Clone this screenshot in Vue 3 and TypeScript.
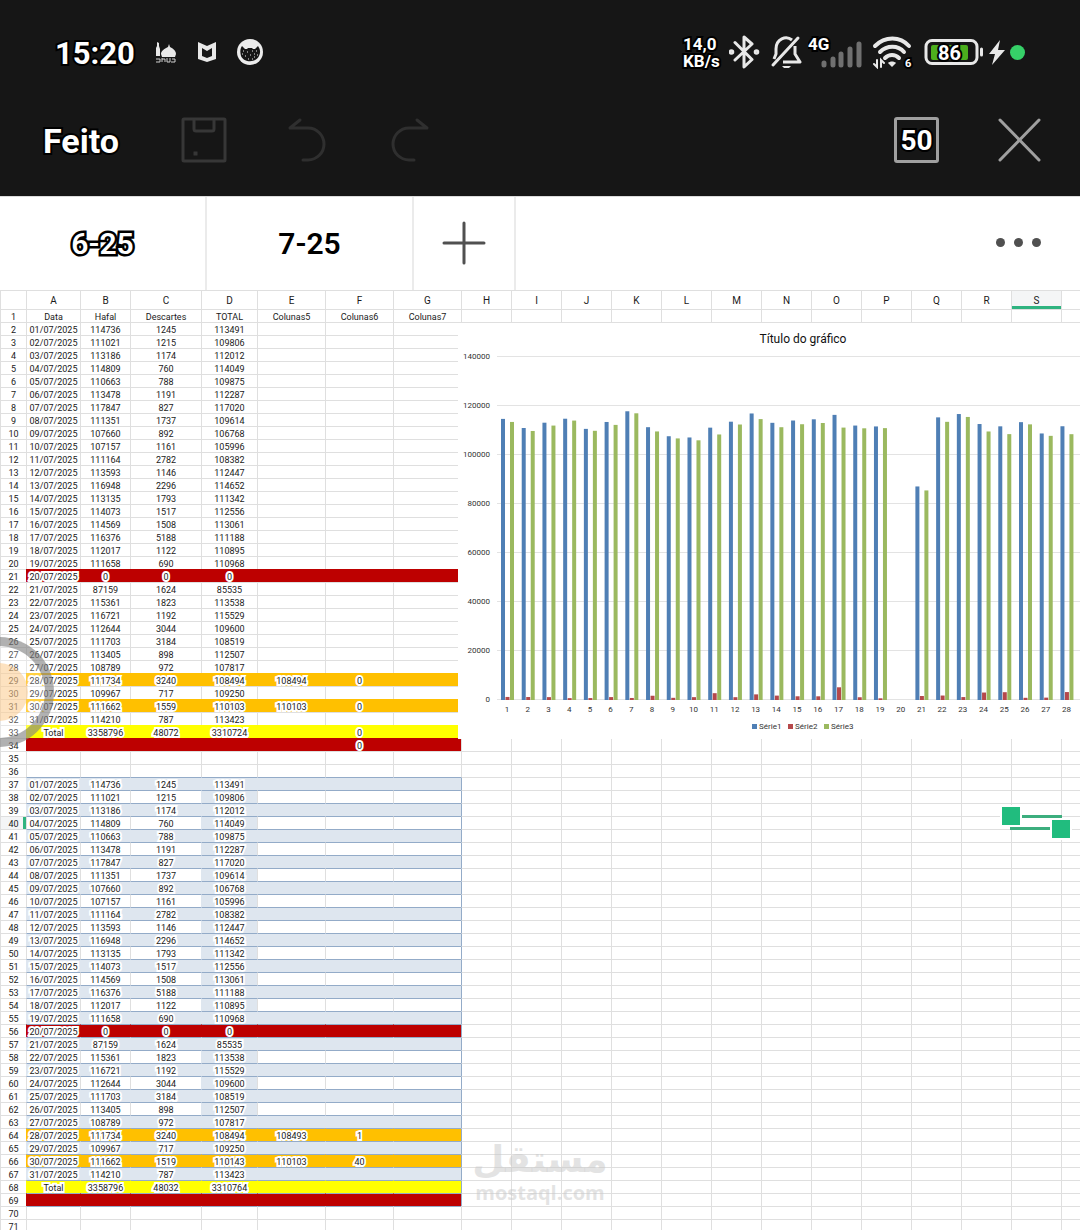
<script setup lang="ts">
type Fill = '' | 'red' | 'orange' | 'yellow' | 'band' | 'plain'
interface Row { n: number; fill: Fill; cells: string[] }

const columns = [...'ABCDEFGHIJKLMNOPQRS'.split(''), '']
const widths = [54, 50, 71, 56, 68, 68, 68]
const colWidth = (i: number): string => (i === columns.length - 1 ? 'auto' : `${widths[i] ?? 50}px`)

const production: number[] = [
  114736, 111021, 113186, 114809, 110663, 113478, 117847, 111351, 107660, 107157, 111164, 113593, 116948, 113135, 114073, 114569,
  116376, 112017, 111658, 0, 87159, 115361, 116721, 112644, 111703, 113405, 108789, 111734, 109967, 111662, 114210,
]
const discards: number[] = [
  1245, 1215, 1174, 760, 788, 1191, 827, 1737, 892, 1161, 2782, 1146, 2296, 1793, 1517, 1508,
  5188, 1122, 690, 0, 1624, 1823, 1192, 3044, 3184, 898, 972, 3240, 717, 1559, 787,
]
const netTotal = production.map((p, i) => p - discards[i])

const dateOf = (i: number): string => `${String(i + 1).padStart(2, '0')}/07/2025`

function buildRow(n: number): Row {
  if (n === 1) return { n, fill: '', cells: ['Data', 'Hafal', 'Descartes', 'TOTAL', 'Colunas5', 'Colunas6', 'Colunas7'] }
  if (n >= 2 && n <= 32) {
    const i = n - 2
    const cells = [dateOf(i), String(production[i]), String(discards[i]), String(netTotal[i])]
    if (n === 29) cells.push('108494', '0')
    if (n === 31) cells.push('110103', '0')
    return { n, fill: n === 21 ? 'red' : n === 29 || n === 31 ? 'orange' : '', cells }
  }
  if (n === 33) return { n, fill: 'yellow', cells: ['Total', '3358796', '48072', '3310724', '', '0'] }
  if (n === 34) return { n, fill: 'red', cells: ['', '', '', '', '', '0'] }
  if (n >= 37 && n <= 67) {
    const i = n - 37
    const cells = [dateOf(i), String(production[i]), String(discards[i]), String(netTotal[i])]
    if (n === 64) cells.push('108493', '1')
    if (n === 66) {
      cells[2] = '1519'
      cells[3] = '110143'
      cells.push('110103', '40')
    }
    return { n, fill: n === 56 ? 'red' : n === 64 || n === 66 ? 'orange' : n % 2 ? 'band' : 'plain', cells }
  }
  if (n === 68) return { n, fill: 'yellow', cells: ['Total', '3358796', '48032', '3310764'] }
  if (n === 69) return { n, fill: 'red', cells: [] }
  return { n, fill: '', cells: [] }
}
const rows: Row[] = Array.from({ length: 71 }, (_, i) => buildRow(i + 1))

function cellClass(row: Row, c: number): string[] {
  const out: string[] = []
  const framed = row.n >= 37 && row.n <= 69
  if (c < 7) {
    if (row.fill === 'plain') {
      if (c === 3) out.push('fill', 'band')
    } else if (row.fill) out.push('fill', row.fill)
    if (framed || row.n === 70) out.push('rule')
  }
  if (c === 7 && framed) out.push('edge')
  return out
}

const plotLeft = 39
const base = 377
const step = 20.72
const ticks = [0, 20000, 40000, 60000, 80000, 100000, 120000, 140000]
const yOf = (v: number): number => base - (v * 49) / 20000
const series = [
  { name: 'Série1', color: '#4f7fb5', data: production, dx: 4 },
  { name: 'Série2', color: '#b5494b', data: discards, dx: 8.5 },
  { name: 'Série3', color: '#9bb95f', data: netTotal, dx: 13 },
]
</script>

<template>
  <div class="app">
    <header class="top">
      <div class="status">
        <span class="clock">15:20</span>
        <svg class="s-icon" width="22" height="26" viewBox="0 0 22 26" fill="#e8e8e8">
          <path d="M2 3l2 1v3l1 3v7H1V9l1-2zM14 5l1 3c4 2 6 4 6 7l-1 3H7l-1-3c0-3 3-5 7-7z" />
          <path d="M1 20h4v3H1M7 19v4M7 20h3v3M12 19v4h3v-4M17 20h3v3h-4" fill="none" stroke="#cfcfcf" stroke-width="1" />
        </svg>
        <svg class="s-icon" width="20" height="26" viewBox="0 0 20 26"><path d="M1 3l9 4 9-4v17l-9 3-9-3zM5 9v8l5 2 5-2V9l-5 3z" fill="#e8e8e8" fill-rule="evenodd" /></svg>
        <svg class="s-icon" width="26" height="26" viewBox="0 0 26 26">
          <circle cx="13" cy="13" r="13" fill="#ececec" />
          <path d="M5 7l3 3h2l1-1h4l1 1h2l3-3c2 3 3 6 1 10-3 7-15 7-18 0-1-4-1-7 1-10z" fill="#161616" />
          <path d="M6 12h1M10 13h1M15 12h1M19 12h1M5 15h1M8 17h1M13 16h1M17 15h1M20 16h1M11 20h1M15 20h1M17 18h1" stroke="#e8e8e8" stroke-width="1" />
        </svg>
        <span class="grow"></span>
        <span class="speed">14,0<br />KB/s</span>
        <svg width="37" height="34" viewBox="0 0 37 34" fill="none" stroke="#e8e8e8" stroke-width="3" stroke-linejoin="round" stroke-linecap="round">
          <path d="M6 7.500l17 17-8 7.500V2l8 7-17 16" /><circle cx="2.500" cy="17" r="1.300" /><circle cx="27.500" cy="17" r="1.300" />
        </svg>
        <svg width="34" height="34" viewBox="0 0 34 34" fill="none" stroke="#e8e8e8" stroke-width="3">
          <path d="M22 5c-6-5-16-1-16 9v5l-2 5M25 11v8l5 8H13" stroke-linejoin="round" /><path d="M28 3L3 30" stroke-linecap="round" /><path d="M12 31h9l-2 2h-5z" fill="#e8e8e8" stroke="none" />
        </svg>
        <svg width="60" height="34" viewBox="0 0 60 34">
          <path d="M16 30v-2M25 30v-6M33 30V19M42 30V14M51 30V9" stroke="#707070" stroke-width="5" stroke-linecap="round" />
          <text class="out" x="0" y="15" font-size="17">4G</text>
        </svg>
        <svg width="48" height="34" viewBox="0 0 48 34" fill="none" stroke="#e8e8e8" stroke-width="4" stroke-linecap="round">
          <path d="M3 11c10-10 25-10 34 0M8 17c7-7 18-7 24 0M13 23c4-4 10-4 14 0" />
          <path d="M20 32l-4-4c2-2 6-2 8 0z" fill="#e8e8e8" stroke="none" />
          <path d="M5 25v7l-3-3M9 32v-7l3 3" stroke-width="2" />
          <text class="out" x="33" y="32" font-size="11">6</text>
        </svg>
        <svg width="60" height="34" viewBox="0 0 60 34">
          <rect x="2" y="5.500" width="51" height="23" rx="6" fill="none" stroke="#e8e8e8" stroke-width="3" />
          <rect x="7" y="10" width="37" height="15" rx="2" fill="#4caf1d" />
          <path d="M57.500 14v6" stroke="#e8e8e8" stroke-width="3" stroke-linecap="round" />
          <text class="out" x="14" y="25" font-size="20">86</text>
        </svg>
        <svg width="18" height="34" viewBox="0 0 18 34"><path d="M12 5L1 19h6L4 30l13-15h-7z" fill="#e8e8e8" /></svg>
        <span class="live"></span>
      </div>

      <div class="toolbar">
        <button class="done">Feito</button>
        <button class="tool" aria-label="Guardar">
          <svg width="46" height="46" viewBox="0 0 46 46" fill="none" stroke="#373737" stroke-width="3">
            <rect x="2" y="2" width="42" height="42" rx="1" /><path d="M13 2v10q0 2 2 2h16q2 0 2-2V2" /><rect x="13" y="35" width="3" height="3" fill="#373737" stroke-width="1" />
          </svg>
        </button>
        <button class="tool" aria-label="Anular">
          <svg width="46" height="46" viewBox="0 0 46 46" fill="none" stroke="#2f2f2f" stroke-width="3" stroke-linecap="round" stroke-linejoin="round"><path d="M16 3L6 11h18a16 16 0 0 1 0 32h-5" /></svg>
        </button>
        <button class="tool" aria-label="Refazer">
          <svg width="46" height="46" viewBox="0 0 46 46" fill="none" stroke="#2f2f2f" stroke-width="3" stroke-linecap="round" stroke-linejoin="round"><path d="M30 3l10 8H22a16 16 0 0 0 0 32h5" /></svg>
        </button>
        <span class="grow"></span>
        <button class="count">50</button>
        <button class="tool" aria-label="Fechar">
          <svg width="46" height="46" viewBox="0 0 46 46" stroke="#a0a0a0" stroke-width="3" stroke-linecap="round"><path d="M4 3l39 40M43 3L4 43" /></svg>
        </button>
      </div>
    </header>

    <nav class="tabs">
      <button class="tab active"><span>6-25</span></button>
      <button class="tab">7-25</button>
      <button class="tab add" aria-label="Adicionar folha">
        <svg width="44" height="44" viewBox="0 0 44 44" stroke="#505050" stroke-width="3" stroke-linecap="round"><path d="M22 2v40M2 22h40" /></svg>
      </button>
      <span class="grow"></span>
      <button class="more" aria-label="Mais"><i></i><i></i><i></i></button>
    </nav>

    <main class="sheet">
      <table>
        <colgroup>
          <col class="c-num" />
          <col v-for="(c, i) in columns" :key="i" :style="{ width: colWidth(i) }" />
        </colgroup>
        <thead>
          <tr>
            <th></th>
            <th v-for="(c, i) in columns" :key="i" :class="{ selected: c === 'S' }">{{ c }}</th>
          </tr>
        </thead>
        <tbody>
          <tr v-for="r in rows" :key="r.n">
            <th :class="{ current: r.n === 40 }">{{ r.n }}</th>
            <td v-for="(c, i) in columns" :key="i" :class="cellClass(r, i)">{{ r.cells[i] }}</td>
          </tr>
        </tbody>
      </table>

      <svg class="chart" width="691" height="416" viewBox="0 0 691 416">
        <text class="title" x="345" y="20" text-anchor="middle">Título do gráfico</text>
        <g v-for="t in ticks" :key="t">
          <line :x1="plotLeft" x2="681" :y1="yOf(t) - 0.5" :y2="yOf(t) - 0.5" stroke="#e3e3e3" />
          <text x="32" :y="yOf(t) + 2" text-anchor="end">{{ t }}</text>
        </g>
        <g v-for="s in series" :key="s.name" :fill="s.color">
          <rect v-for="(v, i) in s.data" :key="i" :x="plotLeft + i * step + s.dx" :y="yOf(v)" width="4" :height="base - yOf(v)" />
        </g>
        <text v-for="(v, i) in production" :key="i" :x="plotLeft + 10 + i * step" y="389" text-anchor="middle">{{ i + 1 }}</text>
        <g v-for="(s, i) in series" :key="s.name">
          <rect :x="294 + i * 36" y="401" width="5" height="5" :fill="s.color" />
          <text :x="301 + i * 36" y="406">{{ s.name }}</text>
        </g>
      </svg>

      <div class="selection"><i></i><i></i></div>
    </main>

    <div class="bubble"><span></span></div>
    <div class="watermark"><span lang="ar" dir="rtl">مستقل</span><b>mostaql.com</b></div>
  </div>
</template>

<style>
body { margin: 0; }
</style>

<style scoped>
.app {
  position: relative;
  display: flex;
  flex-direction: column;
  height: 100vh;
  overflow: hidden;
  background: #fff;
  color: #1a1a1a;
  font-family: Roboto, "Liberation Sans", sans-serif;
}
button { padding: 0; border: 0; background: none; font: inherit; color: inherit; }
svg { display: block; flex: none; }
.grow { flex: 1; }
.top { background: #161616; color: #fff; }
.status { display: flex; align-items: center; gap: 4px; height: 104px; padding: 0 55px; }
.clock, .speed, .done, .count, .out {
  font-weight: 700;
  paint-order: stroke fill;
  -webkit-text-stroke: 4px #000;
}
.clock { font-size: 31px; padding-top: 2px; }
.s-icon { margin-left: 16px; }
.speed { width: 42px; font-size: 17px; line-height: 17px; padding-top: 2px; white-space: nowrap; }
.out { fill: #fff; stroke: #000; stroke-width: 4px; }
.live { width: 15px; height: 15px; border-radius: 50%; background: #36d068; }
.toolbar { display: flex; align-items: center; height: 92px; padding: 0 38px 20px 43px; box-sizing: border-box; }
.done { font-size: 34px; padding-top: 2px; margin-right: 5px; }
.tool { margin-left: 57px; }
.count {
  box-sizing: border-box;
  width: 45px;
  height: 46px;
  border: 3px solid #a0a0a0;
  border-radius: 3px;
  font-size: 28px;
}
.tabs { display: flex; align-items: stretch; height: 94px; border-top: 1px solid #dcdcdc; box-sizing: border-box; }
.tab {
  display: flex;
  align-items: center;
  justify-content: center;
  box-sizing: border-box;
  width: 207px;
  border-right: 2px solid #ebebeb;
  font-size: 30px;
  font-weight: 600;
  color: #000;
}
.active span { color: #fff; paint-order: stroke fill; -webkit-text-stroke: 5px #000; }
.add { width: 102px; padding-bottom: 2px; }
.more { display: flex; align-items: center; gap: 9px; margin-right: 39px; padding-bottom: 2px; }
.more i { width: 9px; height: 9px; border-radius: 50%; background: #505050; }
.sheet { position: relative; flex: 1; min-height: 0; overflow: hidden; }
table { table-layout: fixed; width: 100%; min-width: 1080px; border-collapse: separate; border-spacing: 0; }
.c-num { width: 26px; }
th, td {
  box-sizing: border-box;
  height: 13px;
  padding: 2px 0 0;
  border-top: 1px solid #dfdfdf;
  border-left: 1px solid #dfdfdf;
  font-size: 9px;
  font-weight: 400;
  line-height: 10px;
  text-align: center;
  white-space: nowrap;
}
thead th { height: 19px; font-size: 10px; line-height: 16px; }
.selected { background: #f4f5f6; box-shadow: inset 0 -3px #2fb380; }
.current { background: #f4f5f6; box-shadow: inset -3px 0 #2fb380; }
.fill { paint-order: stroke fill; -webkit-text-stroke: 4px #fff; }
.red { background: #bd0000; border-color: #bd0000; }
.orange { background: #ffc000; border-color: #ffc000; }
.yellow { background: #ff0; border-color: #ff0; }
.band { background: #dee6ef; border-color: #dee6ef; }
.rule { border-top-color: #93abc8; }
.edge { border-left-color: #93abc8; }
.chart { position: absolute; left: 458px; top: 33px; background: #fff; fill: #333; font-size: 8px; }
.title { font-size: 12px; fill: #111; }
.selection {
  position: absolute;
  left: 1010px;
  top: 525px;
  width: 52px;
  height: 15px;
  box-sizing: border-box;
  border: solid #3cae7e;
  border-width: 3px 1px;
}
.selection i { position: absolute; width: 18px; height: 18px; border: 2px solid #fff; background: #21bc7e; }
.selection i:first-child { left: -11px; top: -13px; }
.selection i:last-child { right: -11px; bottom: -13px; }
.bubble {
  position: absolute;
  left: -56px;
  top: 637px;
  box-sizing: border-box;
  width: 110px;
  height: 110px;
  padding: 17px;
  border: 9px solid rgba(100, 100, 100, 0.5);
  border-radius: 50%;
  background: rgba(255, 255, 255, 0.25);
}
.bubble span { display: block; height: 100%; border-radius: 50%; background: rgba(250, 190, 115, 0.45); }
.watermark {
  position: absolute;
  left: 50%;
  bottom: 25px;
  display: flex;
  flex-direction: column;
  align-items: center;
  transform: translateX(-50%);
  color: rgba(200, 200, 200, 0.5);
}
.watermark span { font: 700 37px/42px "DejaVu Sans", sans-serif; }
.watermark b { font: 700 20px/24px "Open Sans", sans-serif; }
</style>
